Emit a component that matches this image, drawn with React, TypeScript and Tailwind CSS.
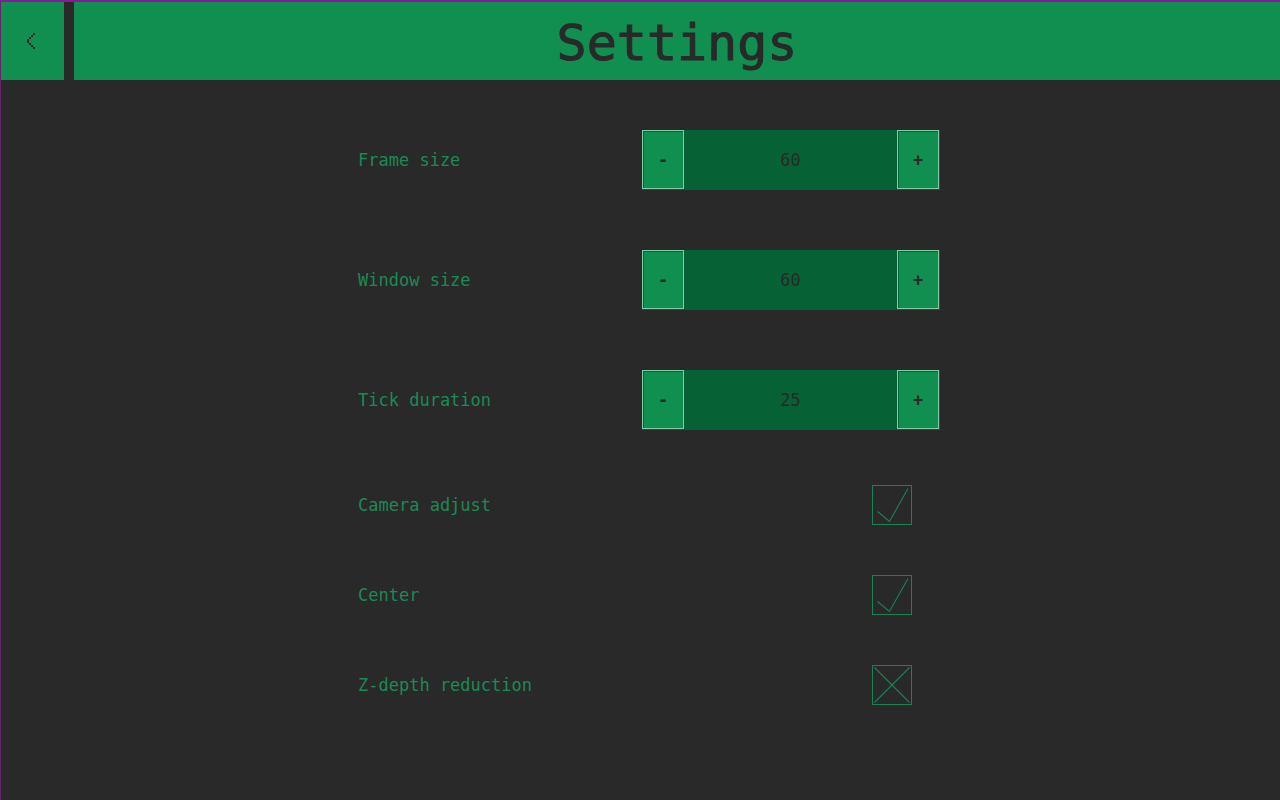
import { useId, useState } from "react";

const stepButton =
  "w-[42px] h-[59px] shrink-0 cursor-pointer border border-[#83cba3] bg-[#118f51] text-[17px] leading-6 font-bold text-[#292929] shadow-[inset_1px_1px_0_#08663a]";

function NumberRow({ label, initial }: { label: string; initial: number }) {
  const id = useId();
  const [value, setValue] = useState(initial);
  return (
    <div className="flex h-[120px] items-center justify-between">
      <label htmlFor={id} className="text-[17px] leading-7">
        {label}
      </label>
      <div className="flex h-[60px] w-[298px] bg-[#066135]">
        <button
          type="button"
          aria-label={`Decrease ${label}`}
          className={stepButton}
          onClick={() => setValue(value - 1)}
        >
          -
        </button>
        <input
          id={id}
          type="text"
          inputMode="numeric"
          value={value}
          onChange={(e) => setValue(Number(e.target.value) || 0)}
          className="min-w-0 flex-1 bg-transparent text-center text-[17px] leading-7 text-[#292929] outline-none"
        />
        <button
          type="button"
          aria-label={`Increase ${label}`}
          className={`${stepButton} mr-px`}
          onClick={() => setValue(value + 1)}
        >
          +
        </button>
      </div>
    </div>
  );
}

function CheckRow({ label, initial }: { label: string; initial: boolean }) {
  const id = useId();
  const [checked, setChecked] = useState(initial);
  return (
    <div className="flex h-[90px] items-center justify-between pr-7">
      <label htmlFor={id} className="text-[17px] leading-7">
        {label}
      </label>
      <div className="relative size-10">
        <input
          id={id}
          type="checkbox"
          checked={checked}
          onChange={(e) => setChecked(e.target.checked)}
          className="block size-10 cursor-pointer appearance-none border border-[#1b8254]"
        />
        <svg
          viewBox="0 0 40 40"
          className="pointer-events-none absolute inset-0 size-10"
          fill="none"
          stroke="#1b8254"
          strokeWidth="1.1"
          aria-hidden="true"
        >
          {checked ? (
            <path d="M5.5 26.5L17.5 36.5L36 3.5" />
          ) : (
            <path d="M2.5 2.5L37.5 37.5M37.5 2.5L2.5 37.5" />
          )}
        </svg>
      </div>
    </div>
  );
}

export default function App() {
  return (
    <div className="min-h-screen border-t-2 border-l border-t-[#8b1799] border-l-[#66246f] bg-[#292929] font-['DejaVu_Sans_Mono',monospace] text-[#1b8a55]">
      <header className="flex h-[78px] gap-[10px] text-[#292929]">
        <button
          type="button"
          aria-label="Back"
          className="flex w-[63px] shrink-0 cursor-pointer items-center justify-center bg-[#118f51] pr-[3px]"
        >
          <svg
            viewBox="0 0 8 16"
            className="h-4 w-2"
            fill="currentColor"
            shapeRendering="crispEdges"
            aria-hidden="true"
          >
            <path d="M6 0h2v2h-2zM4 2h2v2h-2zM2 4h2v2h-2zM0 6h2v4h-2zM2 10h2v2h-2zM4 12h2v2h-2zM6 14h2v2h-2z" />
          </svg>
        </button>
        <h1 className="flex-1 bg-[#118f51] pt-2 text-center text-[50px] leading-[66px] [-webkit-text-stroke:1px_#292929]">
          Settings
        </h1>
      </header>
      <main className="mx-auto w-full max-w-[601px] pt-5 pr-px pl-[18px]">
        <NumberRow label="Frame size" initial={60} />
        <NumberRow label="Window size" initial={60} />
        <NumberRow label="Tick duration" initial={25} />
        <CheckRow label="Camera adjust" initial={true} />
        <CheckRow label="Center" initial={true} />
        <CheckRow label="Z-depth reduction" initial={false} />
      </main>
    </div>
  );
}
